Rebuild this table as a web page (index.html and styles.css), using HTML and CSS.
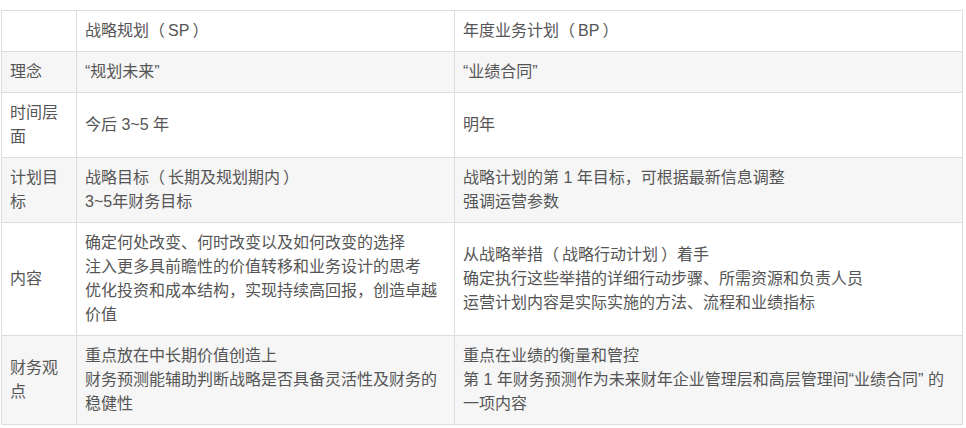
FILE: index.html
```html
<!DOCTYPE html>
<html lang="zh-CN">
<head>
<meta charset="utf-8">
<title>SP vs BP</title>
<link rel="stylesheet" href="styles.css">
</head>
<body>
<table class="cmp">
  <colgroup>
    <col class="c1"><col class="c2"><col class="c3">
  </colgroup>
  <tbody>
    <tr>
      <td></td>
      <td>战略规划<span class="po">（</span>SP<span class="pc">）</span></td>
      <td>年度业务计划<span class="po">（</span>BP<span class="pc">）</span></td>
    </tr>
    <tr class="alt">
      <td>理念</td>
      <td>“规划未来”</td>
      <td>“业绩合同”</td>
    </tr>
    <tr>
      <td>时间层面</td>
      <td>今后 3~5 年</td>
      <td>明年</td>
    </tr>
    <tr class="alt">
      <td>计划目标</td>
      <td>战略目标<span class="po">（</span>长期及规划期内<span class="pc">）</span><br>3~5年财务目标</td>
      <td>战略计划的第 1 年目标，可根据最新信息调整<br>强调运营参数</td>
    </tr>
    <tr>
      <td>内容</td>
      <td>确定何处改变、何时改变以及如何改变的选择<br>注入更多具前瞻性的价值转移和业务设计的思考<br>优化投资和成本结构，实现持续高回报，创造卓越价值</td>
      <td>从战略举措<span class="po">（</span>战略行动计划<span class="pc">）</span>着手<br>确定执行这些举措的详细行动步骤、所需资源和负责人员<br>运营计划内容是实际实施的方法、流程和业绩指标</td>
    </tr>
    <tr class="alt">
      <td>财务观点</td>
      <td>重点放在中长期价值创造上<br>财务预测能辅助判断战略是否具备灵活性及财务的稳健性</td>
      <td>重点在业绩的衡量和管控<br>第 1 年财务预测作为未来财年企业管理层和高层管理间“业绩合同” 的一项内容</td>
    </tr>
  </tbody>
</table>
</body>
</html>
```

FILE: styles.css
```css
html, body {
  margin: 0;
  padding: 0;
  background: #fff;
}
body {
  padding: 10px 0 0 1px;
  font-family: "Liberation Sans", "Noto Sans CJK SC", sans-serif;
  font-size: 16px;
  line-height: 24px;
  color: #555;
}
.cmp {
  border-collapse: collapse;
  table-layout: fixed;
  width: 961px;
}
.c1 { width: 75px; }
.c2 { width: 378px; }
.c3 { width: 508px; }
.cmp td {
  border: 1px solid #ddd;
  padding: 8px;
  vertical-align: middle;
  text-align: left;
}
.cmp tr.alt td {
  background: #f6f6f6;
}
.po {
  margin-right: 3px;
}
.pc {
  margin-left: 3px;
}
```
